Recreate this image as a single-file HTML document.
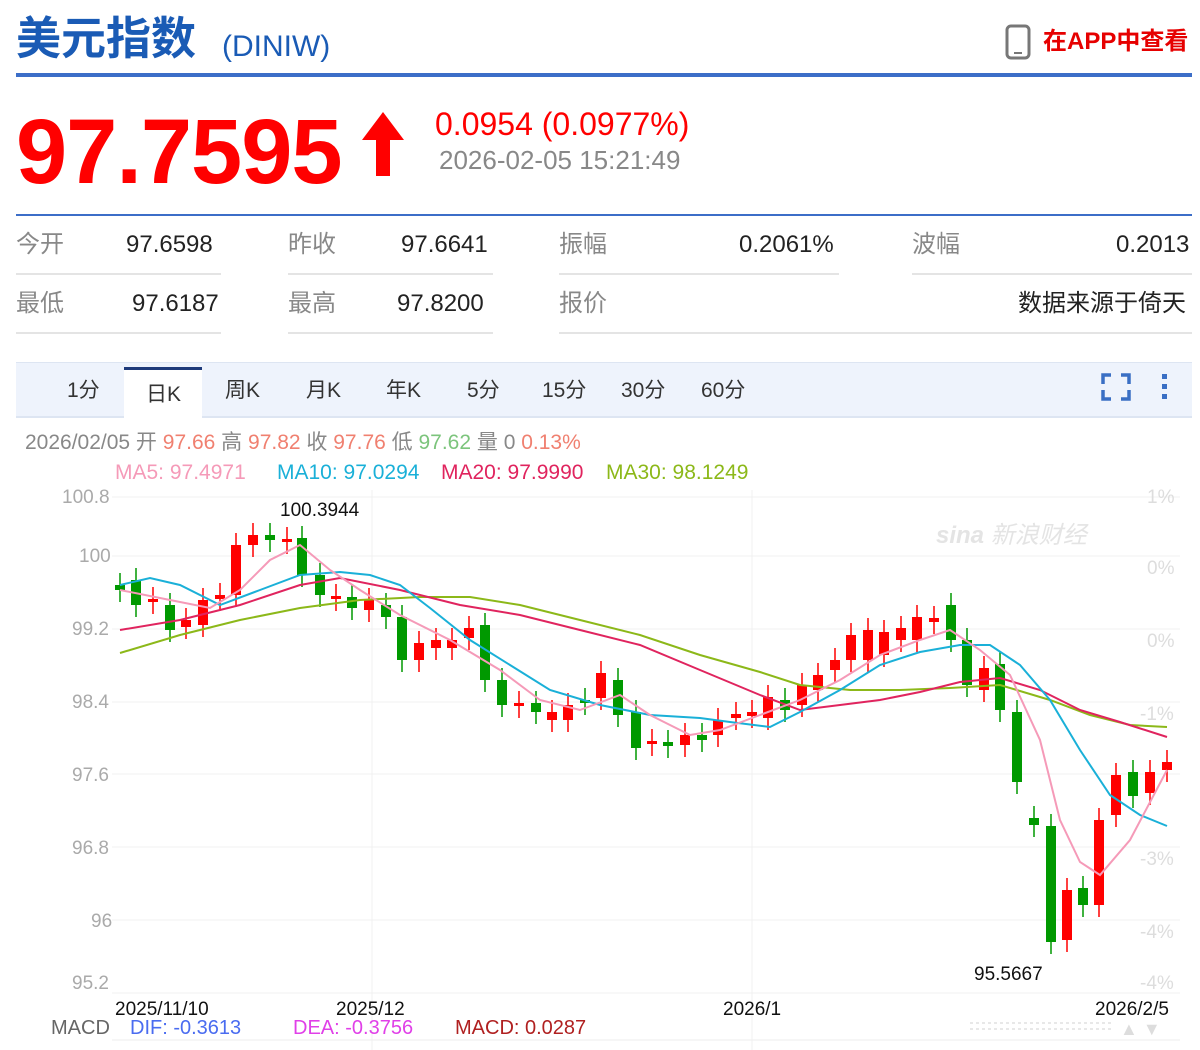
<!DOCTYPE html>
<html><head><meta charset="utf-8">
<style>
*{margin:0;padding:0;box-sizing:border-box}
body{width:1200px;height:1050px;background:#fff;font-family:"Liberation Sans","Noto Sans CJK SC",sans-serif;position:relative;overflow:hidden}
.a{position:absolute;white-space:nowrap;line-height:1}
.cell{position:absolute;height:2px;background:#e4e4e4}
.l{position:absolute;font-size:24px;color:#888;line-height:30px;top:0}
.v{position:absolute;font-size:24px;color:#222;line-height:30px;top:0}
</style></head><body>
<div class="a" style="left:16px;top:16px;font-size:45px;font-weight:bold;color:#1a5bb5">美元指数</div>
<div class="a" style="left:222px;top:32px;font-size:30px;color:#1a5bb5">(DINIW)</div>
<svg class="a" style="left:1005px;top:24px" width="26" height="36"><rect x="2" y="2" width="22" height="32" rx="4" fill="none" stroke="#777" stroke-width="3"/><rect x="9" y="28" width="8" height="2" fill="#777"/></svg>
<div class="a" style="left:1043px;top:30px;font-size:24px;font-weight:bold;color:#e60000">在APP中查看</div>
<div class="a" style="left:16px;top:73px;width:1176px;height:4px;background:#3c6ec8"></div>

<div class="a" style="left:16px;top:106px;font-size:92px;font-weight:bold;color:#f00;letter-spacing:-1px">97.7595</div>
<svg class="a" style="left:358px;top:110px" width="50" height="70"><polygon points="25,2 46,30 32,30 32,66 18,66 18,30 4,30" fill="#f00"/></svg>
<div class="a" style="left:435px;top:108px;font-size:32px;color:#f00">0.0954 (0.0977%)</div>
<div class="a" style="left:439px;top:147px;font-size:26px;color:#888">2026-02-05 15:21:49</div>
<div class="a" style="left:16px;top:214px;width:1176px;height:2px;background:#3c6ec8"></div>

<div class="a" style="left:0;top:230px;width:1200px;height:30px">
<span class="l" style="left:16px">今开</span><span class="v" style="left:126px">97.6598</span>
<span class="l" style="left:288px">昨收</span><span class="v" style="left:401px">97.6641</span>
<span class="l" style="left:559px">振幅</span><span class="v" style="left:739px">0.2061%</span>
<span class="l" style="left:912px">波幅</span><span class="v" style="left:1116px">0.2013</span></div>
<div class="a" style="left:0;top:289px;width:1200px;height:30px">
<span class="l" style="left:16px">最低</span><span class="v" style="left:132px">97.6187</span>
<span class="l" style="left:288px">最高</span><span class="v" style="left:397px">97.8200</span>
<span class="l" style="left:559px">报价</span><span class="v" style="left:1018px;color:#222">数据来源于倚天</span></div>
<div class="cell" style="left:16px;top:273px;width:205px"></div>
<div class="cell" style="left:288px;top:273px;width:205px"></div>
<div class="cell" style="left:559px;top:273px;width:280px"></div>
<div class="cell" style="left:912px;top:273px;width:280px"></div>
<div class="cell" style="left:16px;top:332px;width:205px"></div>
<div class="cell" style="left:288px;top:332px;width:205px"></div>
<div class="cell" style="left:559px;top:332px;width:633px"></div>

<div class="a" style="left:16px;top:362px;width:1176px;height:56px;background:#eef3fc;border-top:1px solid #dde5f2;border-bottom:2px solid #dde5f2"></div>
<div class="a" style="left:124px;top:367px;width:78px;height:51px;background:#fff;border-top:3px solid #1e3a7a"></div>
<div class="a" style="left:0;top:380px;font-size:21px;color:#333">
<span class="a" style="left:67px">1分</span><span class="a" style="left:146px;top:4px">日K</span><span class="a" style="left:225px">周K</span><span class="a" style="left:306px">月K</span><span class="a" style="left:386px">年K</span><span class="a" style="left:467px">5分</span><span class="a" style="left:542px">15分</span><span class="a" style="left:621px">30分</span><span class="a" style="left:701px">60分</span></div>
<svg class="a" style="left:1100px;top:372px" width="80" height="32"><g fill="none" stroke="#3a6fc4" stroke-width="3.5"><path d="M3 12V3h8M21 3h8v9M3 18v9h8M21 27h8v-9"/></g><g fill="#3a6fc4"><rect x="62" y="2" width="5" height="5"/><rect x="62" y="12" width="5" height="5"/><rect x="62" y="22" width="5" height="5"/></g></svg>

<div class="a" style="left:25px;top:432px;font-size:21px;color:#888">2026/02/05 开 <span style="color:#f08070">97.66</span> 高 <span style="color:#f08070">97.82</span> 收 <span style="color:#f08070">97.76</span> 低 <span style="color:#7cc47c">97.62</span> 量 0 <span style="color:#f08070">0.13%</span></div>
<div class="a" style="left:0;top:462px;font-size:21px;width:1200px;height:24px">
<span class="a" style="left:115px;color:#f59ab8">MA5: 97.4971</span><span class="a" style="left:277px;color:#1ab0d8">MA10: 97.0294</span><span class="a" style="left:441px;color:#e0245e">MA20: 97.9990</span><span class="a" style="left:606px;color:#8cb819">MA30: 98.1249</span></div>

<svg id="ch" class="a" style="left:0;top:0" width="1200" height="1050"></svg>
<div class="a" style="left:0;top:0;font-size:19px;color:#aaa">
<span class="a" style="left:62px;top:488px">100.8</span><span class="a" style="left:79px;top:547px">100</span><span class="a" style="left:72px;top:620px">99.2</span><span class="a" style="left:72px;top:693px">98.4</span><span class="a" style="left:72px;top:766px">97.6</span><span class="a" style="left:72px;top:839px">96.8</span><span class="a" style="left:91px;top:912px">96</span><span class="a" style="left:72px;top:974px">95.2</span>
<span class="a" style="left:1147px;top:488px;color:#ddd">1%</span><span class="a" style="left:1147px;top:559px;color:#ddd">0%</span><span class="a" style="left:1147px;top:632px;color:#ddd">0%</span><span class="a" style="left:1140px;top:705px;color:#ddd">-1%</span><span class="a" style="left:1140px;top:850px;color:#ddd">-3%</span><span class="a" style="left:1140px;top:923px;color:#ddd">-4%</span><span class="a" style="left:1140px;top:974px;color:#ddd">-4%</span></div>
<div class="a" style="left:936px;top:524px;font-size:24px;font-style:italic;font-weight:bold;color:#e4e4e4">sina <span style="font-weight:normal">新浪财经</span></div>
<div class="a" style="left:280px;top:501px;font-size:19px;color:#111">100.3944</div>
<div class="a" style="left:974px;top:965px;font-size:19px;color:#111">95.5667</div>
<div class="a" style="left:0;top:1000px;font-size:19px;color:#111"><span class="a" style="left:115px">2025/11/10</span><span class="a" style="left:336px">2025/12</span><span class="a" style="left:723px">2026/1</span><span class="a" style="left:1095px">2026/2/5</span></div>
<div class="a" style="left:0;top:1018px;font-size:20px;width:1200px;height:24px">
<span class="a" style="left:51px;color:#666">MACD</span><span class="a" style="left:130px;color:#4a6cf0">DIF: -0.3613</span><span class="a" style="left:293px;color:#e040e8">DEA: -0.3756</span><span class="a" style="left:455px;color:#b02020">MACD: 0.0287</span></div>
<div class="a" style="left:1120px;top:1020px;font-size:18px;color:#ddd">▲ ▼</div>
<script>
var s='';
[497,556,629,702,774,847,920,993].forEach(function(y){s+='<line x1="112" x2="1180" y1="'+y+'" y2="'+y+'" stroke="#f0f0f0"/>'});
[372,752].forEach(function(x){s+='<line x1="'+x+'" x2="'+x+'" y1="490" y2="1050" stroke="#f0f0f0"/>'});
s+='<line x1="112" x2="1180" y1="1040" y2="1040" stroke="#eee"/>';
s+='<g fill="#e8e8e8">';for(var i=0;i<24;i++){s+='<rect x="'+(970+i*6)+'" y="1022" width="3" height="2"/><rect x="'+(970+i*6)+'" y="1028" width="3" height="2"/>';}s+='</g>';
var c=[[120,0,585,590],[136,0,580,605],[153,1,599,602],[170,0,605,630],[186,1,620,627],[203,1,600,625],[220,1,595,599],[236,1,545,595],[253,1,535,545],[270,0,535,540],[287,1,539,542],[302,0,538,575],[320,0,575,595],[336,1,596,599],[352,0,597,608],[369,1,600,610],[386,0,605,617],[402,0,617,660],[419,1,643,660],[436,1,640,648],[452,1,640,648],[469,1,628,638],[485,0,625,680],[502,0,680,705],[519,1,703,706],[536,0,703,712],[552,1,712,720],[568,1,705,720],[585,0,700,703],[601,1,673,698],[618,0,680,715],[636,0,712,748],[652,1,741,744],[668,0,742,746],[685,1,735,745],[702,0,735,740],[718,1,720,735],[736,1,714,718],[752,1,712,716],[768,1,697,718],[785,0,700,710],[802,1,685,705],[818,1,675,690],[835,1,660,670],[851,1,635,660],[868,1,630,660],[884,1,632,655],[901,1,628,640],[917,1,617,640],[934,1,618,622],[951,0,605,640],[967,0,640,685],[984,1,668,690],[1000,0,664,710],[1017,0,712,782],[1034,0,818,825],[1051,0,826,942],[1067,1,890,940],[1083,0,888,905],[1099,1,820,905],[1116,1,775,815],[1133,0,772,796],[1150,1,772,793],[1167,1,762,770]];
c.forEach(function(d){var col=d[1]?'#f00':'#090';var h=Math.max(3,d[3]-d[2]);
s+='<line x1="'+d[0]+'" x2="'+d[0]+'" y1="'+(d[2]-12)+'" y2="'+(d[3]+12)+'" stroke="'+col+'" stroke-width="1.5"/>';
s+='<rect x="'+(d[0]-5)+'" y="'+d[2]+'" width="10" height="'+h+'" fill="'+col+'"/>';});
function pl(p,col){s+='<polyline fill="none" stroke="'+col+'" stroke-width="2" points="'+p+'"/>'}
pl('120,653 180,635 240,620 300,608 360,600 420,597 470,597 520,605 580,620 640,635 700,655 760,672 800,685 850,690 900,690 950,688 1000,685 1050,700 1090,715 1130,725 1167,727','#8cb819');
pl('120,630 180,620 240,605 300,585 340,578 400,590 460,605 520,615 580,630 640,645 700,670 760,695 800,710 840,705 880,700 920,692 960,682 1000,678 1040,690 1080,710 1120,722 1167,737','#e0245e');
pl('120,585 150,578 180,585 220,605 260,590 300,575 340,572 370,575 400,585 430,608 470,640 510,665 550,690 600,705 650,715 700,718 730,722 770,727 800,712 840,690 880,665 920,652 960,645 990,645 1020,665 1050,700 1080,750 1110,795 1140,815 1167,826','#1ab0d8');
pl('120,590 170,600 210,608 240,590 270,560 300,545 330,570 360,590 400,615 450,640 500,670 540,700 580,710 620,695 650,715 690,735 720,730 760,715 800,700 840,680 880,655 920,640 950,630 980,650 1010,675 1040,740 1060,820 1080,862 1100,875 1130,840 1167,770','#f59ab8');
document.getElementById('ch').innerHTML=s;
</script>
</body></html>
